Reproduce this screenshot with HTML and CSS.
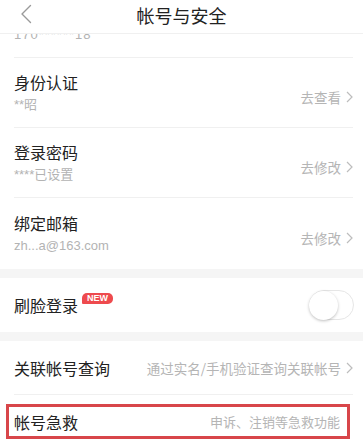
FILE: index.html
```html
<!DOCTYPE html>
<html lang="zh-CN">
<head>
<meta charset="utf-8">
<title>帐号与安全</title>
<link rel="stylesheet" href="styles.css">
</head>
<body>
<div class="page">
  <header class="nav">
    <svg class="back" width="12" height="20" viewBox="0 0 12 20"><path d="M10.5 1.5 L2 10 L10.5 18.5" fill="none" stroke="#9a9a9a" stroke-width="1.4" stroke-linecap="round" stroke-linejoin="round"/></svg>
    <h1 class="nav-title">帐号与安全</h1>
  </header>
  <main class="list">
    <section class="group">
      <div class="row row-two">
        <div class="texts">
          <div class="title">手机号码</div>
          <div class="sub phone">170******18</div>
        </div>
      </div>
      <div class="row row-two">
        <div class="texts">
          <div class="title">身份认证</div>
          <div class="sub">**昭</div>
        </div>
        <div class="action"><span class="action-text">去查看</span><svg class="chev" width="7" height="12" viewBox="0 0 7 12"><path d="M1 1 L6 6 L1 11" fill="none" stroke="#bdbdbd" stroke-width="1.2"/></svg></div>
      </div>
      <div class="row row-two">
        <div class="texts">
          <div class="title">登录密码</div>
          <div class="sub">****已设置</div>
        </div>
        <div class="action"><span class="action-text">去修改</span><svg class="chev" width="7" height="12" viewBox="0 0 7 12"><path d="M1 1 L6 6 L1 11" fill="none" stroke="#bdbdbd" stroke-width="1.2"/></svg></div>
      </div>
      <div class="row row-two">
        <div class="texts">
          <div class="title">绑定邮箱</div>
          <div class="sub">zh...a@163.com</div>
        </div>
        <div class="action"><span class="action-text">去修改</span><svg class="chev" width="7" height="12" viewBox="0 0 7 12"><path d="M1 1 L6 6 L1 11" fill="none" stroke="#bdbdbd" stroke-width="1.2"/></svg></div>
      </div>
    </section>
    <section class="group">
      <div class="row row-one">
        <div class="title-wrap"><span class="title">刷脸登录</span><span class="badge">NEW</span></div>
        <div class="switch"><span class="knob"></span></div>
      </div>
    </section>
    <section class="group">
      <div class="row row-one">
        <span class="title">关联帐号查询</span>
        <div class="action"><span class="action-text">通过实名/手机验证查询关联帐号</span><svg class="chev" width="7" height="12" viewBox="0 0 7 12"><path d="M1 1 L6 6 L1 11" fill="none" stroke="#bdbdbd" stroke-width="1.2"/></svg></div>
      </div>
      <div class="row row-one row-rescue">
        <span class="title">帐号急救</span>
        <div class="action"><span class="action-text small">申诉、注销等急救功能</span></div>
        <span class="highlight"></span>
      </div>
    </section>
  </main>
</div>
</body>
</html>
```
FILE: styles.css
```css
* { box-sizing: border-box; }
html, body { margin: 0; padding: 0; }
body {
  background: #ffffff;
  font-family: "Liberation Sans", "Noto Sans CJK SC", sans-serif;
  color: #222;
  width: 363px;
  height: 448px;
  overflow: hidden;
}
.page { position: relative; width: 363px; height: 448px; overflow: hidden; background: #f5f5f5; }

.nav {
  position: absolute;
  top: 0; left: 0; right: 0;
  height: 34px;
  background: #fff;
  border-bottom: 1px solid #f0f0f0;
  display: flex;
  align-items: center;
  justify-content: center;
  z-index: 2;
}
.back { position: absolute; left: 20px; top: 4px; width: 12px; height: 20px; }
.nav-title {
  margin: 0;
  font-family: "Noto Sans CJK SC", sans-serif;
  font-size: 18px;
  font-weight: 400;
  line-height: 24px;
  color: #222;
  margin-top: -4px;
}

.list { margin-top: -12px; display: flex; flex-direction: column; gap: 9px; }
.group { background: #fff; }

.row {
  margin: 0 10px 0 14px;
  display: flex;
  align-items: center;
  justify-content: space-between;
  border-bottom: 1px solid #f0f0f0;
}
.row:last-child { border-bottom: none; }
.row-two { height: 70px; padding: 0; }
.row-one { height: 54px; }
.group .row-two:last-child { height: 71px; }

.texts { display: flex; flex-direction: column; gap: 3px; }
.title {
  font-family: "Noto Sans CJK SC", sans-serif;
  font-size: 16px;
  line-height: 22px;
  color: #222;
}
.sub {
  font-size: 13px;
  line-height: 18px;
  color: #b3b3b3;
}
.sub.phone { letter-spacing: 1px; }
.action { display: flex; align-items: center; gap: 5px; padding-top: 8px; }
.row-one .action { padding-top: 0; }
.action-text {
  font-family: "Noto Sans CJK SC", sans-serif;
  font-size: 13.5px;
  line-height: 18px;
  color: #b5b5b5;
}
.action-text.small { font-size: 13px; margin-right: 13px; }
.chev { width: 7px; height: 12px; display: block; }

.title-wrap { display: flex; align-items: flex-start; }
.badge {
  margin-left: 4px;
  margin-top: -1px;
  background: #ee4a4e;
  color: #fff;
  font-family: "Liberation Sans", sans-serif;
  font-weight: 700;
  font-size: 9px;
  line-height: 11px;
  height: 11px;
  padding: 0 5px;
  border-radius: 5px 5px 5px 1px;
}

.switch {
  width: 45px;
  height: 30px;
  border-radius: 15px;
  border: 1px solid #e6e6e6;
  background: #fff;
  display: flex;
  align-items: center;
  margin-right: -1px;
}
.knob {
  width: 29px;
  height: 29px;
  border-radius: 50%;
  background: #fff;
  box-shadow: 0 1px 3px rgba(0,0,0,0.25);
  margin-left: -1px;
}

.row-rescue { position: relative; }
.highlight {
  position: absolute;
  left: -8px;
  right: 3px;
  top: 9px;
  bottom: 10px;
  border: 3px solid #d8464a;
  pointer-events: none;
}
```
